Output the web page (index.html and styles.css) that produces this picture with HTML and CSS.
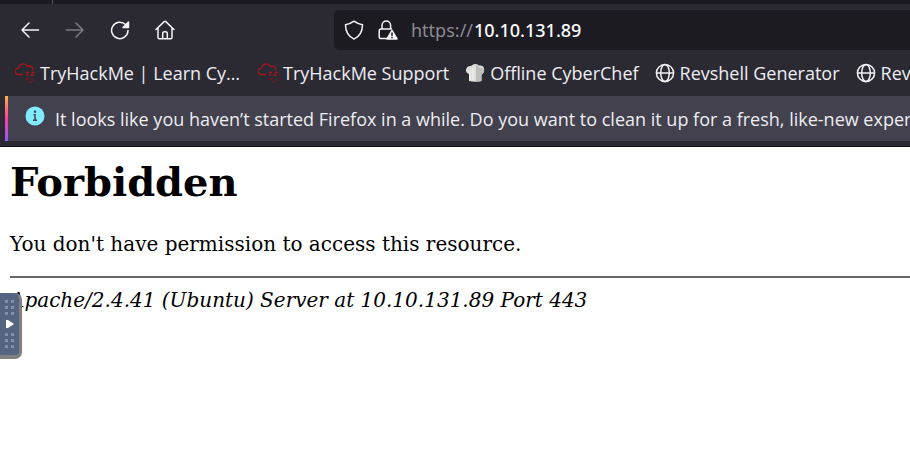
FILE: index.html
```html
<!DOCTYPE html>
<html lang="en">
<head>
<meta charset="utf-8">
<title>403 Forbidden</title>
<link rel="stylesheet" href="styles.css">
</head>
<body>
<svg class="defs" aria-hidden="true">
  <symbol id="cloud" viewBox="0 0 20 20">
    <g fill="none" stroke="#a5161d" stroke-width="1.3">
      <path d="M8 11.500H3.200A3 3 0 0 1 3.500 5.200A4.800 4.800 0 0 1 12.500 3.500A3.800 3.800 0 0 1 18 7.500"/>
      <path d="M11 9.500h3M16.500 9.500h3M11 12h2M15 12h4" />
      <path d="M11 16h4M16.500 17h3M14 19h3" stroke="#6f1a20"/>
    </g>
  </symbol>
  <symbol id="globe" viewBox="0 0 20 20">
    <g fill="none" stroke="#f4f4f6" stroke-width="1.500">
      <circle cx="10" cy="10" r="8.600"/>
      <ellipse cx="10" cy="10" rx="4.300" ry="8.600"/>
      <path d="M1.500 10h17"/>
    </g>
  </symbol>
</svg>
<header class="chrome">
  <div class="tabs"></div>
  <nav class="toolbar" aria-label="Navigation">
    <div class="buttons">
      <button class="tool" aria-label="Back"><svg viewBox="0 0 20 20"><path d="M18.500 10H2M9 3L2 10l7 7"/></svg></button>
      <button class="tool" aria-label="Forward" disabled><svg viewBox="0 0 20 20"><path d="M1.500 10H18M11 3l7 7-7 7"/></svg></button>
      <button class="tool" aria-label="Reload"><svg viewBox="0 0 20 20"><path d="M18 10.500A8.200 8.200 0 1 1 15.500 4.500"/><path class="solid" d="M18.500 2v5.500h-5.500z"/></svg></button>
      <button class="tool" aria-label="Home"><svg viewBox="0 0 20 20"><path d="M1 9.500L9.200 1.600q.8-.7 1.600 0L19 9.500M3 8v9.500q0 1.300 1.300 1.300h11.400q1.300 0 1.300-1.300V8M7.700 18.500v-5q0-1.800 1.800-1.800h1q1.800 0 1.800 1.800v5"/></svg></button>
    </div>
    <div class="urlbar">
      <svg viewBox="0 0 20 20"><path d="M10 1.200c2.500 1.900 5 3 8.500 3.600c0 7-2.500 11.500-8.500 14.300C4 16.300 1.500 11.800 1.500 4.800C5 4.200 7.500 3.100 10 1.200z"/></svg>
      <svg class="lock" viewBox="0 0 20 20"><path d="M9 18.500H3q-1.800 0-1.800-1.800V10.800Q1.200 9 3 9h10.500M4 9V5.200a4.300 4.300 0 0 1 8.600 0V9"/><path class="warn" d="M14 10.500L9 19h10z"/><path class="mark" d="M14 13v2.500M14 17.500v.2"/></svg>
      <label class="scheme" for="url">https://</label>
      <input class="host" id="url" type="text" value="10.10.131.89">
    </div>
  </nav>
  <nav class="bookmarks" aria-label="Bookmarks">
    <a class="bookmark wide" href="#"><svg><use href="#cloud"/></svg><span>TryHackMe | Learn Cy…</span></a>
    <a class="bookmark" href="#"><svg><use href="#cloud"/></svg><span>TryHackMe Support</span></a>
    <a class="bookmark" href="#"><svg viewBox="0 0 20 20"><path fill="#dededc" d="M4 18V11Q.5 10 1 6.500Q2 2.500 6 3Q10-.5 14 2.500Q19 2 19.200 6.500Q19 10.500 16.500 11.500V18Q10 19.500 4 18z"/><path fill="#bdbdbb" d="M11 2q3-.5 3 2.500q5 0 5 3q-.5 3.500-2.500 4v6.500q-2 .7-5.500.6z"/><path fill="none" stroke="#f5f5f3" d="M5 8v9M8 5v12"/></svg><span>Offline CyberChef</span></a>
    <a class="bookmark" href="#"><svg><use href="#globe"/></svg><span>Revshell Generator</span></a>
    <a class="bookmark" href="#"><svg><use href="#globe"/></svg><span>Reverse</span></a>
  </nav>
  <div class="notice" role="status">
    <svg viewBox="0 0 20 20"><circle cx="10" cy="10" r="9.500" fill="#80ebff"/><circle cx="10" cy="5.800" r="1.200" fill="#42414d"/><path d="M8.500 8.800H10V14M8 14.200h4" fill="none" stroke="#42414d" stroke-width="1.500"/></svg>
    <span>It looks like you haven’t started Firefox in a while. Do you want to clean it up for a fresh, like-new experience?</span>
  </div>
</header>
<main class="page">
  <h1>Forbidden</h1>
  <p>You don't have permission to access this resource.</p>
  <hr>
  <address>Apache/2.4.41 (Ubuntu) Server at 10.10.131.89 Port 443</address>
  <button class="handle" aria-label="Open control bar">
    <svg viewBox="0 0 20 62"><path fill="#8291a8" d="M5 7h3v3H5zM11 7h3v3h-3zM5 13h3v3H5zM11 13h3v3h-3zM5 19h3v3H5zM11 19h3v3h-3zM5 40h3v3H5zM11 40h3v3h-3zM5 46h3v3H5zM11 46h3v3h-3zM5 52h3v3H5zM11 52h3v3h-3z"/><path fill="#fff" d="M6 27h2l6 4-6 4H6z"/></svg>
  </button>
</main>
</body>
</html>
```
FILE: styles.css
```css
* {
  box-sizing: border-box;
}

body {
  display: flex;
  flex-direction: column;
  min-height: 100vh;
  margin: 0;
  background: #fff;
  color: #000;
  overflow: hidden;
}

.defs {
  position: absolute;
  width: 0;
  height: 0;
}

.chrome {
  background: #2b2a33;
  color: #ededf2;
  font: 18px/24px "Open Sans", sans-serif;
  padding-bottom: 5px;
  border-bottom: 1px solid #111015;
}

.chrome svg {
  width: 20px;
  height: 20px;
  flex: none;
}

.tabs {
  height: 4px;
  background: #1c1b22;
}

.tabs::before {
  content: "";
  display: block;
  width: 52px;
  height: 4px;
  border-right: 1px solid #55545e;
}

.toolbar {
  display: flex;
  align-items: center;
  height: 52px;
}

.buttons {
  display: flex;
  gap: 5px;
  width: 334px;
  padding-left: 10px;
}

.tool {
  display: flex;
  align-items: center;
  justify-content: center;
  width: 40px;
  height: 40px;
  padding: 0;
  border: 0;
  background: none;
}

.tool path,
.urlbar path {
  fill: none;
  stroke: #f4f4f6;
  stroke-width: 1.5;
  stroke-linecap: round;
  stroke-linejoin: round;
}

.tool .solid,
.urlbar .warn {
  fill: #f4f4f6;
}

.urlbar .mark {
  stroke: #1c1b22;
}

.tool:disabled {
  opacity: 0.4;
}

.urlbar {
  display: flex;
  align-items: center;
  flex: 1;
  height: 40px;
  padding-left: 10px;
  border-radius: 5px 0 0 5px;
  background: #1c1b22;
  font-family: "Noto Sans", sans-serif;
}

.urlbar .lock {
  margin: 0 13px 0 14px;
}

.scheme {
  padding-right: 1px;
  color: #8b8a91;
}

.host {
  flex: 1;
  min-width: 0;
  padding: 0;
  border: 0;
  background: none;
  color: #fbfbfe;
  font: inherit;
  font-weight: 500;
}

.bookmarks {
  display: flex;
  align-items: center;
  gap: 16px;
  height: 34px;
  padding-left: 15px;
  overflow: hidden;
}

.bookmark {
  display: flex;
  align-items: center;
  gap: 5px;
  flex: none;
  color: inherit;
  text-decoration: none;
  white-space: nowrap;
}

.wide {
  min-width: 227px;
}

.notice {
  display: flex;
  align-items: flex-start;
  gap: 10px;
  height: 45px;
  margin: 6px 0 0 5px;
  padding: 10px 0 0 17px;
  border-left: 3px solid;
  border-image: linear-gradient(#ffb13d, #ff3ea5 50%, #9059ff) 1;
  background: #42414d;
  line-height: 26px;
  white-space: nowrap;
  overflow: hidden;
}

.page {
  position: relative;
  flex: 1;
  padding: 11px 0 0 10px;
  font: 20px/23px "DejaVu Serif", serif;
}

h1 {
  margin: 0 0 28px;
  font-size: 40px;
  line-height: 47px;
}

p {
  margin: 0 0 20px;
}

hr {
  margin: 0 0 11px;
  border: 0;
  border-top: 2px solid #666;
}

.handle {
  position: absolute;
  left: 0;
  top: 146px;
  width: 22px;
  height: 66px;
  padding: 0;
  border: solid #808080;
  border-width: 0 3px 4px 0;
  border-radius: 0 7px 7px 0;
  background: #53657f;
}

.handle svg {
  display: block;
  width: 20px;
  height: 62px;
}
```
